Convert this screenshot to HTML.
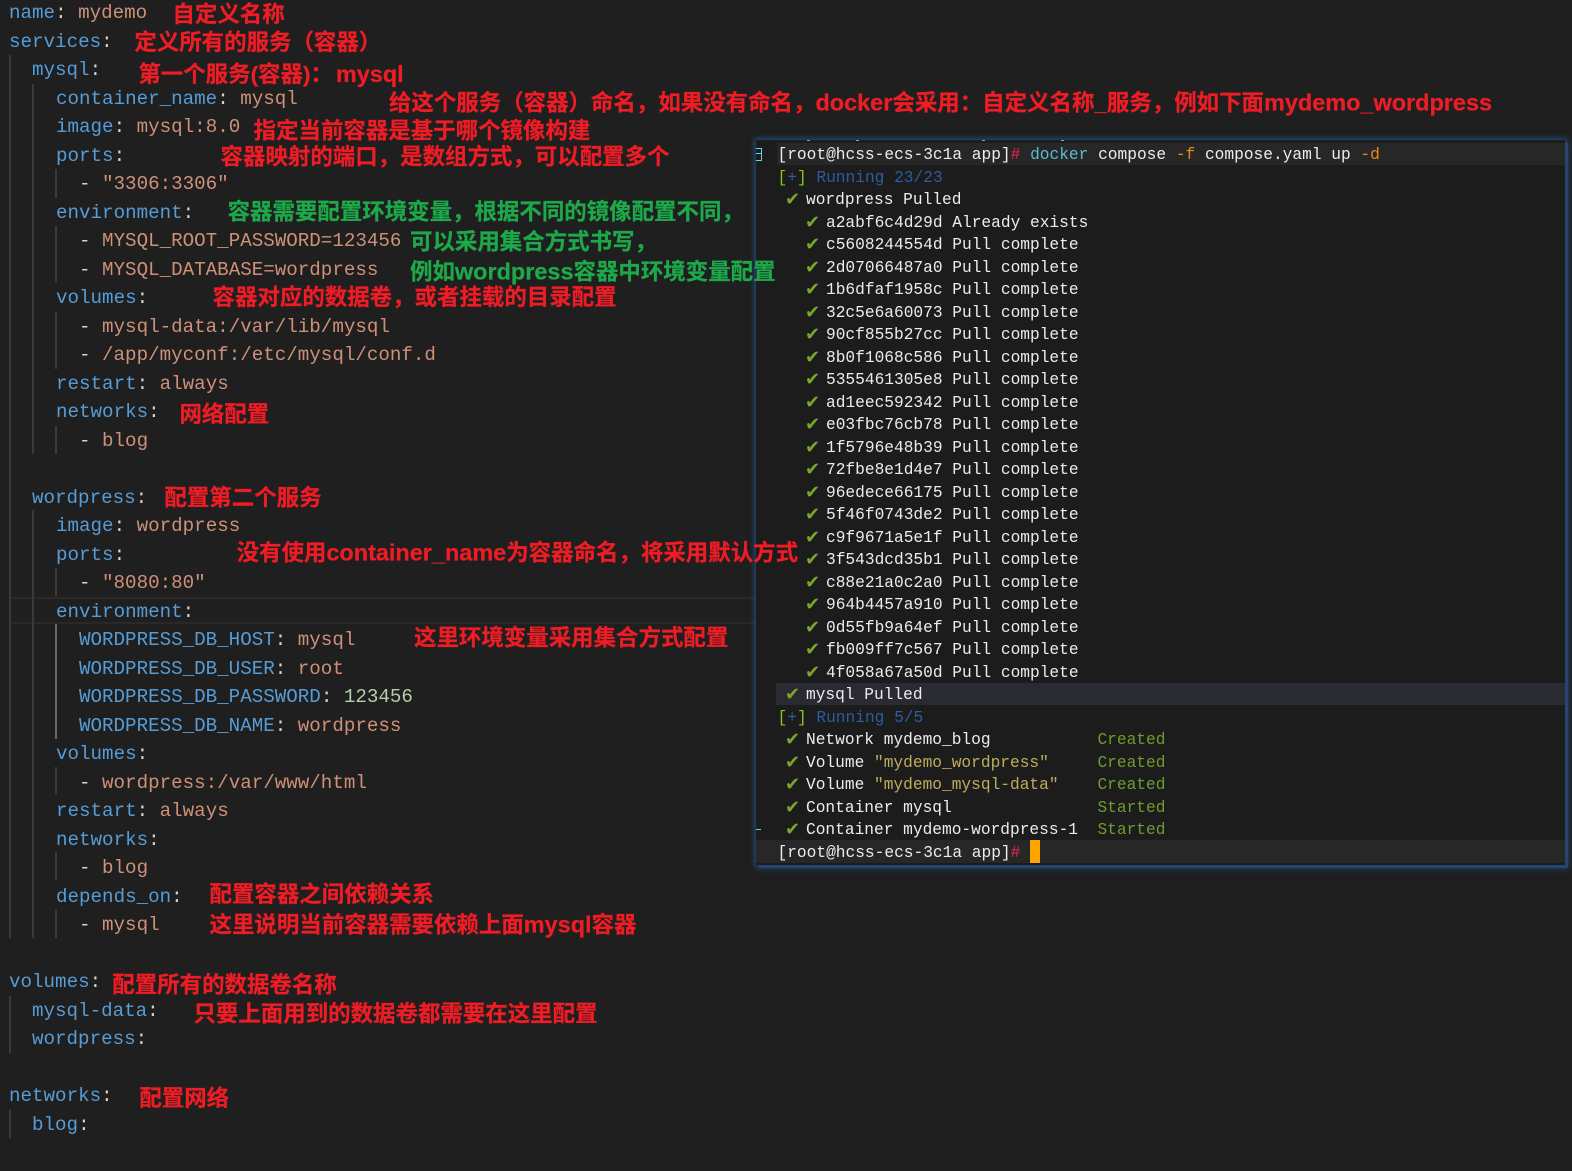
<!DOCTYPE html>
<html lang="zh-CN"><head><meta charset="utf-8"><title>compose</title>
<style>
html,body{margin:0;padding:0;background:#1f1f1f}
#p{position:relative;width:1572px;height:1171px;overflow:hidden;background:#1f1f1f}
.e,.t,.a,.g,.b{position:absolute}
.e{font:19.2px/28px "Liberation Mono",monospace;white-space:pre;color:#d4d4d4}
.k{color:#569cd6}.v{color:#ce9178}.n{color:#b5cea8}
.g{width:2px;background:#3a3a3a}
#term{position:absolute;left:756px;top:140px;width:809px;height:725px;background:#1c1c1c;box-shadow:3px 3px 0 #24466f,0 0 5px 2px rgba(36,80,135,.75),3px 3px 7px 2px rgba(36,80,135,.35)}
.t{font:16.2px/22px "Liberation Mono",monospace;white-space:pre;color:#ececec}
.c{position:absolute;left:-21px;top:0;font:18px/22px "DejaVu Sans",sans-serif;color:#7aa62a}
.gr{color:#6f9c2c}.bl{color:#2f5c9e}.br{color:#86c41c}.pk{color:#ec2555}.cy{color:#5cbcd0}.or{color:#e58a14}.ye{color:#bcae5c}
#ann{position:absolute;left:0;top:1px;width:1572px;height:1171px;transform:scale(1.0025);transform-origin:0 0}
.a{font:bold 22.4px/30px "Liberation Sans","Noto Sans CJK SC",sans-serif;white-space:pre;color:#ee1c25;-webkit-text-stroke:.25px currentColor}
.a i{font-style:normal;font-size:23.4px}
.a.gn{color:#1da84a}
</style></head><body><div id="p">

<div class="b" style="left:10px;top:597px;width:746px;height:2px;background:#292929"></div>
<div class="b" style="left:10px;top:622px;width:746px;height:2px;background:#292929"></div>

<div class="g" style="left:9px;top:55px;height:883px"></div>
<div class="g" style="left:32px;top:84px;height:370px"></div>
<div class="g" style="left:32px;top:510px;height:428px"></div>
<div class="g" style="left:55px;top:169px;height:29px"></div>
<div class="g" style="left:55px;top:226px;height:57px"></div>
<div class="g" style="left:55px;top:312px;height:57px"></div>
<div class="g" style="left:55px;top:426px;height:28px"></div>
<div class="g" style="left:55px;top:568px;height:28px"></div>
<div class="g" style="left:55px;top:624px;height:115px;background:#686868"></div>
<div class="g" style="left:55px;top:767px;height:28px"></div>
<div class="g" style="left:55px;top:852px;height:28px"></div>
<div class="g" style="left:55px;top:909px;height:29px"></div>
<div class="g" style="left:9px;top:996px;height:57px"></div>
<div class="g" style="left:9px;top:1110px;height:28px"></div>

<div class="e" style="left:9px;top:-1px"><span class="k">name</span>: <span class="v">mydemo</span></div>
<div class="e" style="left:9px;top:27.5px"><span class="k">services</span>:</div>
<div class="e" style="left:32px;top:56px"><span class="k">mysql</span>:</div>
<div class="e" style="left:56px;top:84.5px"><span class="k">container_name</span>: <span class="v">mysql</span></div>
<div class="e" style="left:56px;top:113px"><span class="k">image</span>: <span class="v">mysql:8.0</span></div>
<div class="e" style="left:56px;top:141.5px"><span class="k">ports</span>:</div>
<div class="e" style="left:79px;top:170px">- <span class="v">"3306:3306"</span></div>
<div class="e" style="left:56px;top:198.5px"><span class="k">environment</span>:</div>
<div class="e" style="left:79px;top:227px">- <span class="v">MYSQL_ROOT_PASSWORD=123456</span></div>
<div class="e" style="left:79px;top:255.5px">- <span class="v">MYSQL_DATABASE=wordpress</span></div>
<div class="e" style="left:56px;top:284px"><span class="k">volumes</span>:</div>
<div class="e" style="left:79px;top:312.5px">- <span class="v">mysql-data:/var/lib/mysql</span></div>
<div class="e" style="left:79px;top:341px">- <span class="v">/app/myconf:/etc/mysql/conf.d</span></div>
<div class="e" style="left:56px;top:369.5px"><span class="k">restart</span>: <span class="v">always</span></div>
<div class="e" style="left:56px;top:398px"><span class="k">networks</span>:</div>
<div class="e" style="left:79px;top:426.5px">- <span class="v">blog</span></div>
<div class="e" style="left:32px;top:483.5px"><span class="k">wordpress</span>:</div>
<div class="e" style="left:56px;top:512px"><span class="k">image</span>: <span class="v">wordpress</span></div>
<div class="e" style="left:56px;top:540.5px"><span class="k">ports</span>:</div>
<div class="e" style="left:79px;top:569px">- <span class="v">"8080:80"</span></div>
<div class="e" style="left:56px;top:597.5px"><span class="k">environment</span>:</div>
<div class="e" style="left:79px;top:626px"><span class="k">WORDPRESS_DB_HOST</span>: <span class="v">mysql</span></div>
<div class="e" style="left:79px;top:654.5px"><span class="k">WORDPRESS_DB_USER</span>: <span class="v">root</span></div>
<div class="e" style="left:79px;top:683px"><span class="k">WORDPRESS_DB_PASSWORD</span>: <span class="n">123456</span></div>
<div class="e" style="left:79px;top:711.5px"><span class="k">WORDPRESS_DB_NAME</span>: <span class="v">wordpress</span></div>
<div class="e" style="left:56px;top:740px"><span class="k">volumes</span>:</div>
<div class="e" style="left:79px;top:768.5px">- <span class="v">wordpress:/var/www/html</span></div>
<div class="e" style="left:56px;top:797px"><span class="k">restart</span>: <span class="v">always</span></div>
<div class="e" style="left:56px;top:825.5px"><span class="k">networks</span>:</div>
<div class="e" style="left:79px;top:854px">- <span class="v">blog</span></div>
<div class="e" style="left:56px;top:882.5px"><span class="k">depends_on</span>:</div>
<div class="e" style="left:79px;top:911px">- <span class="v">mysql</span></div>
<div class="e" style="left:9px;top:968px"><span class="k">volumes</span>:</div>
<div class="e" style="left:32px;top:996.5px"><span class="k">mysql-data</span>:</div>
<div class="e" style="left:32px;top:1025px"><span class="k">wordpress</span>:</div>
<div class="e" style="left:9px;top:1082px"><span class="k">networks</span>:</div>
<div class="e" style="left:32px;top:1110.5px"><span class="k">blog</span>:</div>

<div id="term"></div>
<div class="b" style="left:807px;top:140px;width:3px;height:1px;background:#999"></div>
<div class="b" style="left:856px;top:140px;width:3px;height:1px;background:#999"></div>
<div class="b" style="left:982px;top:140px;width:3px;height:1px;background:#999"></div>
<div class="b" style="left:1061px;top:140px;width:3px;height:1px;background:#999"></div>
<div class="b" style="left:777px;top:143px;width:788px;height:22px;background:#272727"></div>
<div class="b" style="left:776px;top:683px;width:789px;height:22px;background:#2a2a33"></div>
<div class="b" style="left:756px;top:840px;width:809px;height:23px;background:#272727"></div>
<div class="b" style="left:756px;top:148px;width:5px;height:11px;border:1px solid #5fd7e8;border-left:0"></div>
<div class="b" style="left:756px;top:153px;width:5px;height:1px;background:#5fd7e8"></div>
<div class="b" style="left:756px;top:829px;width:5px;height:1px;background:#5fd7e8"></div>

<div class="t" style="left:777.5px;top:144px">[root@hcss-ecs-3c1a app]<span class="pk">#</span> <span class="cy">docker</span> compose <span class="or">-f</span> compose.yaml up <span class="or">-d</span></div>
<div class="t" style="left:777.5px;top:166.5px"><span class="br">[</span><span class="bl">+</span><span class="br">]</span> <span class="bl">Running 23/23</span></div>
<div class="t" style="left:806px;top:189px"><span class="c">✔</span>wordpress Pulled</div>
<div class="t" style="left:826px;top:211.5px"><span class="c">✔</span>a2abf6c4d29d Already exists</div>
<div class="t" style="left:826px;top:234px"><span class="c">✔</span>c5608244554d Pull complete</div>
<div class="t" style="left:826px;top:256.5px"><span class="c">✔</span>2d07066487a0 Pull complete</div>
<div class="t" style="left:826px;top:279px"><span class="c">✔</span>1b6dfaf1958c Pull complete</div>
<div class="t" style="left:826px;top:301.5px"><span class="c">✔</span>32c5e6a60073 Pull complete</div>
<div class="t" style="left:826px;top:324px"><span class="c">✔</span>90cf855b27cc Pull complete</div>
<div class="t" style="left:826px;top:346.5px"><span class="c">✔</span>8b0f1068c586 Pull complete</div>
<div class="t" style="left:826px;top:369px"><span class="c">✔</span>5355461305e8 Pull complete</div>
<div class="t" style="left:826px;top:391.5px"><span class="c">✔</span>ad1eec592342 Pull complete</div>
<div class="t" style="left:826px;top:414px"><span class="c">✔</span>e03fbc76cb78 Pull complete</div>
<div class="t" style="left:826px;top:436.5px"><span class="c">✔</span>1f5796e48b39 Pull complete</div>
<div class="t" style="left:826px;top:459px"><span class="c">✔</span>72fbe8e1d4e7 Pull complete</div>
<div class="t" style="left:826px;top:481.5px"><span class="c">✔</span>96edece66175 Pull complete</div>
<div class="t" style="left:826px;top:504px"><span class="c">✔</span>5f46f0743de2 Pull complete</div>
<div class="t" style="left:826px;top:526.5px"><span class="c">✔</span>c9f9671a5e1f Pull complete</div>
<div class="t" style="left:826px;top:549px"><span class="c">✔</span>3f543dcd35b1 Pull complete</div>
<div class="t" style="left:826px;top:571.5px"><span class="c">✔</span>c88e21a0c2a0 Pull complete</div>
<div class="t" style="left:826px;top:594px"><span class="c">✔</span>964b4457a910 Pull complete</div>
<div class="t" style="left:826px;top:616.5px"><span class="c">✔</span>0d55fb9a64ef Pull complete</div>
<div class="t" style="left:826px;top:639px"><span class="c">✔</span>fb009ff7c567 Pull complete</div>
<div class="t" style="left:826px;top:661.5px"><span class="c">✔</span>4f058a67a50d Pull complete</div>
<div class="t" style="left:806px;top:684px"><span class="c">✔</span>mysql Pulled</div>
<div class="t" style="left:777.5px;top:706.5px"><span class="br">[</span><span class="bl">+</span><span class="br">]</span> <span class="bl">Running 5/5</span></div>
<div class="t" style="left:806px;top:729px"><span class="c">✔</span>Network mydemo_blog           <span class="gr">Created</span></div>
<div class="t" style="left:806px;top:751.5px"><span class="c">✔</span>Volume <span class="ye">"mydemo_wordpress"</span>     <span class="gr">Created</span></div>
<div class="t" style="left:806px;top:774px"><span class="c">✔</span>Volume <span class="ye">"mydemo_mysql-data"</span>    <span class="gr">Created</span></div>
<div class="t" style="left:806px;top:796.5px"><span class="c">✔</span>Container mysql               <span class="gr">Started</span></div>
<div class="t" style="left:806px;top:819px"><span class="c">✔</span>Container mydemo-wordpress-1  <span class="gr">Started</span></div>
<div class="t" style="left:777.5px;top:841.5px">[root@hcss-ecs-3c1a app]<span class="pk">#</span></div>
<div class="b" style="left:1030px;top:840px;width:10px;height:23px;background:#ffa500"></div>

<div id="ann">
<div class="a" style="left:172px;top:-1px">自定义名称</div>
<div class="a" style="left:134px;top:27px">定义所有的服务（容器）</div>
<div class="a" style="left:138px;top:58px">第一个服务(容器)：<i style="margin-left:3px">mysql</i></div>
<div class="a" style="left:388px;top:86px">给这个服务（容器）命名，如果没有命名，<i>docker</i>会采用：自定义名称_服务，例如下面<i>mydemo_wordpress</i></div>
<div class="a" style="left:253px;top:115px">指定当前容器是基于哪个镜像构建</div>
<div class="a" style="left:220px;top:141px">容器映射的端口，是数组方式，可以配置多个</div>
<div class="a gn" style="left:227px;top:196px">容器需要配置环境变量，根据不同的镜像配置不同，</div>
<div class="a gn" style="left:409px;top:226px">可以采用集合方式书写，</div>
<div class="a gn" style="left:409px;top:255px">例如<i>wordpress</i>容器中环境变量配置</div>
<div class="a" style="left:212px;top:281px">容器对应的数据卷，或者挂载的目录配置</div>
<div class="a" style="left:179px;top:398px">网络配置</div>
<div class="a" style="left:164px;top:481px">配置第二个服务</div>
<div class="a" style="left:236px;top:535px">没有使用<i>container_name</i>为容器命名，将采用默认方式</div>
<div class="a" style="left:413px;top:621px">这里环境变量采用集合方式配置</div>
<div class="a" style="left:209px;top:877px">配置容器之间依赖关系</div>
<div class="a" style="left:209px;top:906px">这里说明当前容器需要依赖上面<i>mysql</i>容器</div>
<div class="a" style="left:112px;top:967px">配置所有的数据卷名称</div>
<div class="a" style="left:193px;top:996px">只要上面用到的数据卷都需要在这里配置</div>
<div class="a" style="left:139px;top:1080px">配置网络</div>
</div>
</div></body></html>
